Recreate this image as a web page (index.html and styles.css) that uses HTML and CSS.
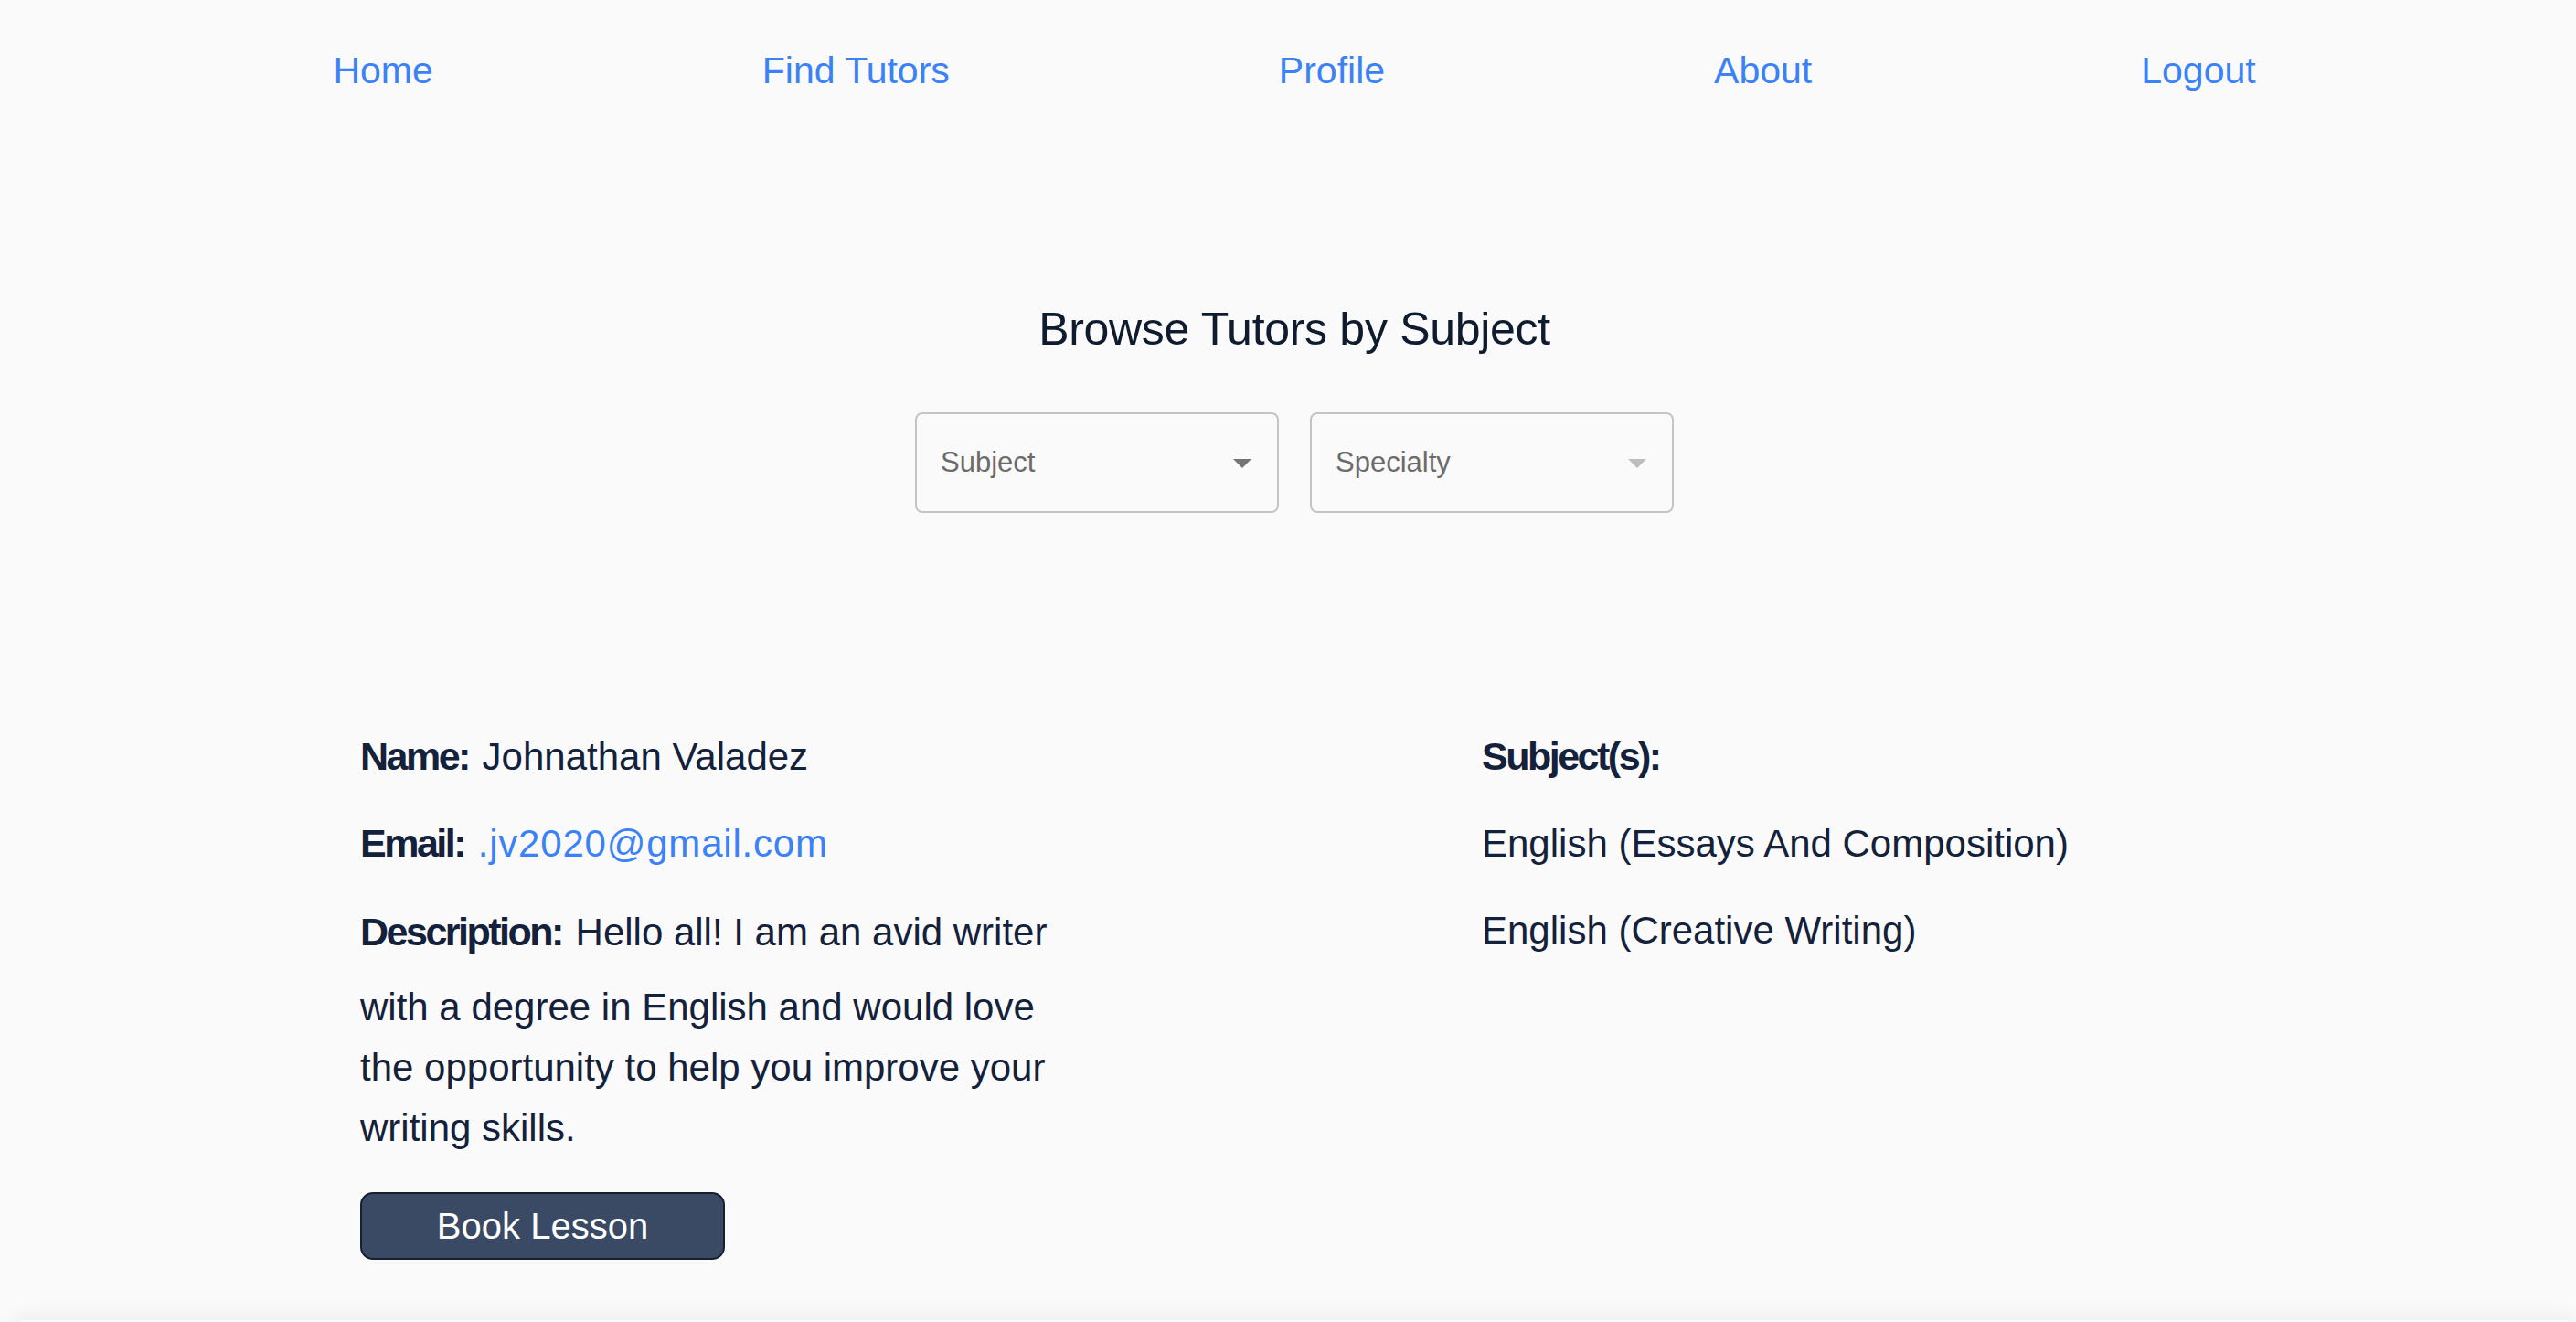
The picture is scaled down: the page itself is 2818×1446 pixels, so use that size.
FILE: index.html
```html
<!DOCTYPE html>
<html lang="en">
<head>
<meta charset="utf-8">
<title>Browse Tutors</title>
<link rel="stylesheet" href="styles.css">
</head>
<body>
<div class="page">
  <nav class="nav">
    <a class="nav-link" href="#">Home</a>
    <a class="nav-link" href="#">Find Tutors</a>
    <a class="nav-link" href="#">Profile</a>
    <a class="nav-link" href="#">About</a>
    <a class="nav-link" href="#">Logout</a>
  </nav>

  <main class="main">
    <h1 class="title">Browse Tutors by Subject</h1>
    <div class="filters">
      <div class="select">
        <span class="select-label">Subject</span>
        <span class="arrow"></span>
      </div>
      <div class="select disabled">
        <span class="select-label">Specialty</span>
        <span class="arrow"></span>
      </div>
    </div>

    <section class="tutor">
      <div class="col-left">
        <div class="row"><strong class="label">Name:</strong> Johnathan Valadez</div>
        <div class="row"><strong class="label">Email:</strong> <a class="email" href="#">.jv2020@gmail.com</a></div>
        <p class="desc"><strong class="label desc-label">Description:</strong> Hello all! I am an avid writer with a degree in English and would love the opportunity to help you improve your writing skills.</p>
        <button class="book">Book Lesson</button>
      </div>
      <div class="col-right">
        <div class="row"><strong class="label">Subject(s):</strong></div>
        <div class="row">English (Essays And Composition)</div>
        <div class="row">English (Creative Writing)</div>
      </div>
    </section>
  </main>
  <div class="next-card"></div>
</div>
</body>
</html>
```

FILE: styles.css
```css
html, body {
  margin: 0;
  padding: 0;
  background: #fafafa;
  overflow: hidden;
}

body {
  font-family: "Liberation Sans", Arial, sans-serif;
  color: #14213a;
}

.page {
  padding-left: 14px;
}

.nav {
  display: flex;
  justify-content: center;
  gap: 360px;
  padding-top: 53px;
}

.nav-link {
  font-size: 41px;
  line-height: 48px;
  color: #3b82f6;
  text-decoration: none;
}

.main {
  display: flex;
  flex-direction: column;
}

.title {
  margin: 229px 0 0;
  text-align: center;
  font-size: 50px;
  line-height: 60px;
  font-weight: normal;
  color: #0f1b2e;
  letter-spacing: -0.3px;
}

.filters {
  display: flex;
  justify-content: center;
  gap: 34px;
  margin-top: 61px;
}

.select {
  box-sizing: border-box;
  width: 398px;
  height: 110px;
  border: 2px solid #c4c4c4;
  border-radius: 8px;
  display: flex;
  align-items: center;
  justify-content: space-between;
  padding: 0 28px 0 26px;
}

.select-label {
  font-size: 31px;
  color: #6b6b6b;
}

.arrow {
  width: 0;
  height: 0;
  border-left: 10px solid transparent;
  border-right: 10px solid transparent;
  border-top: 10px solid #757575;
  margin-top: 2px;
}

.select.disabled .arrow {
  border-top-color: #bdbdbd;
}

.tutor {
  display: grid;
  grid-template-columns: 1227px 1fr;
  padding-left: 380px;
  margin-top: 219px;
}

.row {
  font-size: 42px;
  line-height: 95px;
  margin: 0;
}

.label {
  font-family: "Liberation Sans", Arial, sans-serif;
  font-weight: bold;
  font-size: 43px;
  letter-spacing: -2.5px;
  margin-right: 3px;
  line-height: 95px;
  color: #14213a;
}

.email {
  color: #3b82f6;
  text-decoration: none;
  letter-spacing: 0.8px;
}

.desc {
  margin: 0;
  max-width: 790px;
  font-size: 42px;
  line-height: 66px;
}

.desc-label {
  line-height: 99px;
}

.book {
  margin-top: 37px;
  box-sizing: border-box;
  width: 399px;
  height: 74px;
  background: #3a4a65;
  border: 2px solid #17202e;
  border-radius: 14px;
  color: #ffffff;
  font-family: "Liberation Sans", Arial, sans-serif;
  font-size: 40px;
  padding: 0;
  cursor: pointer;
}

.next-card {
  margin: 66px 1px 0 1px;
  height: 300px;
  border-radius: 10px;
  background: #fafafa;
  box-shadow: 0 -2px 24px rgba(0, 0, 0, 0.07);
}
```
